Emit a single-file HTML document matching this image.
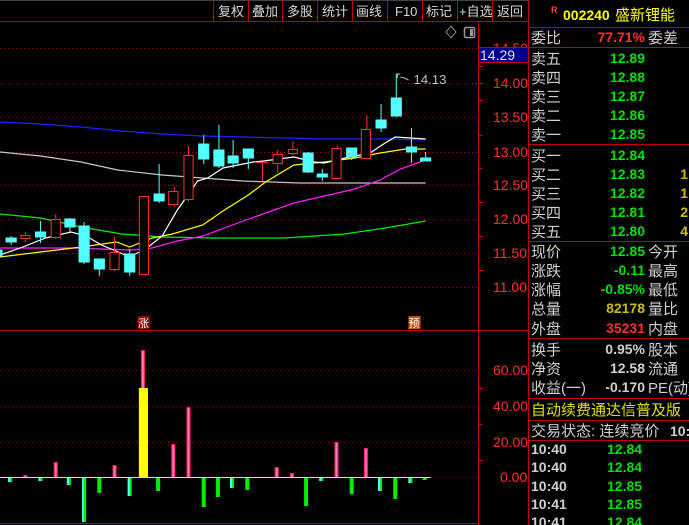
<!DOCTYPE html>
<html><head><meta charset="utf-8"><style>
html,body{margin:0;padding:0;background:#000;width:689px;height:525px;overflow:hidden}
svg{display:block;font-family:"Liberation Sans","Noto Sans CJK SC",sans-serif}
</style></head><body>
<svg width="689" height="525" viewBox="0 0 689 525" xmlns="http://www.w3.org/2000/svg">
<rect width="689" height="525" fill="#000"/>
<!-- toolbar -->
<g stroke="#c00000" stroke-width="1">
<line x1="0" y1="21.5" x2="528" y2="21.5"/>
<line x1="0" y1="0.5" x2="528" y2="0.5" stroke="#444"/>
<line x1="213.5" y1="0" x2="213.5" y2="21"/><line x1="248.5" y1="0" x2="248.5" y2="21"/>
<line x1="282.5" y1="0" x2="282.5" y2="21"/><line x1="317.5" y1="0" x2="317.5" y2="21"/>
<line x1="352.5" y1="0" x2="352.5" y2="21"/><line x1="387.5" y1="0" x2="387.5" y2="21"/>
<line x1="422.5" y1="0" x2="422.5" y2="21"/><line x1="457.5" y1="0" x2="457.5" y2="21"/>
<line x1="492.5" y1="0" x2="492.5" y2="21"/>
</g>
<g fill="#d8d8d8" font-size="13">
<text x="218" y="16">复权</text><text x="252" y="16">叠加</text><text x="287" y="16">多股</text>
<text x="322" y="16">统计</text><text x="356" y="16">画线</text><text x="395" y="16">F10</text>
<text x="426" y="16">标记</text><text x="459" y="16">+自选</text><text x="497" y="16">返回</text>
</g>
<!-- icons -->
<path d="M451 26 L456 32 L451 38 L446 32 Z" fill="none" stroke="#888" stroke-width="1"/>
<rect x="464.5" y="27.5" width="10" height="10" rx="1.5" fill="none" stroke="#999" stroke-width="1.5"/>
<rect x="470" y="29" width="3" height="7" fill="#999"/>
<!-- axes -->
<g stroke="#c00000">
<line x1="478.5" y1="22" x2="478.5" y2="525"/>
<line x1="528.5" y1="0" x2="528.5" y2="525"/>
<line x1="0" y1="330.5" x2="528" y2="330.5"/>
<line x1="0" y1="523.5" x2="478" y2="523.5"/>
</g>
<g stroke="#c00000" stroke-dasharray="1,3">
<line x1="0" y1="48.5" x2="478" y2="48.5"/><line x1="0" y1="83.5" x2="478" y2="83.5"/>
<line x1="0" y1="117.5" x2="478" y2="117.5"/><line x1="0" y1="152.5" x2="478" y2="152.5"/>
<line x1="0" y1="185.5" x2="478" y2="185.5"/><line x1="0" y1="219.5" x2="478" y2="219.5"/>
<line x1="0" y1="253.5" x2="478" y2="253.5"/><line x1="0" y1="287.5" x2="478" y2="287.5"/>
<line x1="0" y1="370.5" x2="478" y2="370.5"/><line x1="0" y1="406.5" x2="478" y2="406.5"/>
<line x1="0" y1="442.5" x2="478" y2="442.5"/><line x1="425" y1="477.5" x2="478" y2="477.5"/>
</g>
<g stroke="#c00000">
<line x1="478" y1="66.5" x2="483" y2="66.5"/><line x1="478" y1="100.5" x2="483" y2="100.5"/>
<line x1="478" y1="135.5" x2="483" y2="135.5"/><line x1="478" y1="168.5" x2="483" y2="168.5"/>
<line x1="478" y1="202.5" x2="483" y2="202.5"/><line x1="478" y1="236.5" x2="483" y2="236.5"/>
<line x1="478" y1="270.5" x2="483" y2="270.5"/><line x1="478" y1="83.5" x2="483" y2="83.5"/>
<line x1="478" y1="388.5" x2="483" y2="388.5"/><line x1="478" y1="424.5" x2="483" y2="424.5"/>
<line x1="478" y1="460.5" x2="483" y2="460.5"/>
</g>
<g fill="#ff3030" font-size="14">
<text x="493" y="53">14.50</text>
<text x="493" y="88">14.00</text><text x="493" y="122">13.50</text><text x="493" y="157">13.00</text>
<text x="493" y="190">12.50</text><text x="493" y="224">12.00</text><text x="493" y="258">11.50</text>
<text x="493" y="292">11.00</text>
<text x="493" y="375">60.00</text><text x="493" y="411">40.00</text><text x="493" y="447">20.00</text>
<text x="500" y="482">0.00</text>
</g>
<rect x="478.5" y="47.5" width="50" height="15" fill="#000090" stroke="#c00000"/>
<text x="480" y="60" fill="#e0e0e0" font-size="14">14.29</text>

<g transform="scale(1.0135,1)">
<!-- MAs -->
<g fill="none" stroke-width="1.2">
<polyline stroke="#2020ff" points="0,122 40,124 80,127 120,131 160,134 200,136 240,137 280,138 320,139 380,139 420,140"/>
<polyline stroke="#c8c8c8" points="0,152 40,156 80,162 116,170 160,175 200,178 240,181 296,183 420,183"/>
<polyline stroke="#00ee00" points="0,214 40,218 80,227 120,234 160,237 210,238 280,238 310,236 340,234 380,228 420,221"/>
<polyline stroke="#ff20ff" points="0,248 70,248 130,250 150,248 175,241 200,236 240,221 290,203 320,196 350,189 375,180 395,169 420,160"/>
<polyline stroke="#ffff00" points="0,257 40,252 80,247 115,242 128,247 150,238 170,234 200,225 220,211 245,195 262,182 290,165 320,162 350,158 375,153 400,149 420,149"/>
<polyline stroke="#ffffff" points="0,255 20,248 45,238 70,232 85,236 100,245 112,250 128,257 145,248 160,236 175,210 195,181 205,178 220,168 250,162 260,161 290,157 310,162 320,163 345,157 365,153 380,143 390,137 405,138 420,139"/>
</g>
<!-- candles: cyan -->
<g stroke="#54ffff" fill="#54ffff">
<line x1="11" y1="236" x2="11" y2="245"/><rect x="6" y="238" width="10" height="4"/>
<rect x="0" y="250" width="2" height="6"/>
<line x1="40" y1="221" x2="40" y2="243"/><rect x="35" y="232" width="10" height="5"/>
<line x1="69" y1="218" x2="69" y2="232"/><rect x="64" y="219" width="10" height="8"/>
<line x1="83" y1="222" x2="83" y2="264"/><rect x="78" y="226" width="10" height="36"/>
<line x1="98" y1="259" x2="98" y2="276"/><rect x="93" y="259" width="10" height="10"/>
<line x1="128" y1="249" x2="128" y2="276"/><rect x="123" y="254" width="10" height="18"/>
<line x1="157" y1="164" x2="157" y2="203"/><rect x="152" y="194" width="10" height="7"/>
<line x1="201" y1="135" x2="201" y2="164"/><rect x="196" y="144" width="10" height="15"/>
<line x1="216" y1="125" x2="216" y2="168"/><rect x="211" y="150" width="10" height="16"/>
<line x1="230" y1="140" x2="230" y2="168"/><rect x="225" y="156" width="10" height="7"/>
<line x1="245" y1="149" x2="245" y2="169"/><rect x="240" y="149" width="10" height="9"/>
<line x1="304" y1="152" x2="304" y2="173"/><rect x="299" y="153" width="10" height="19"/>
<line x1="318" y1="169" x2="318" y2="181"/><rect x="313" y="174" width="10" height="3"/>
<line x1="347" y1="148" x2="347" y2="160"/><rect x="342" y="148" width="10" height="9"/>
<line x1="376" y1="104" x2="376" y2="132"/><rect x="371" y="120" width="10" height="8"/>
<line x1="391" y1="74" x2="391" y2="117"/><rect x="386" y="98" width="10" height="18"/>
<line x1="406" y1="128" x2="406" y2="163"/><rect x="401" y="147" width="10" height="5"/>
<line x1="420" y1="152" x2="420" y2="161"/><rect x="415" y="158" width="10" height="3"/>
</g>
<!-- candles: red hollow -->
<g stroke="#ff3030" fill="#000">
<line x1="25" y1="232" x2="25" y2="242"/><rect x="20.5" y="235.5" width="9" height="3"/>
<line x1="55" y1="214" x2="55" y2="239"/><rect x="50.5" y="219.5" width="9" height="18"/>
<line x1="113" y1="237" x2="113" y2="271"/><rect x="108.5" y="252.5" width="9" height="17"/>
<rect x="137.5" y="196.5" width="9" height="78"/>
<line x1="172" y1="187" x2="172" y2="207"/><rect x="166.5" y="191.5" width="9" height="13"/>
<line x1="186" y1="146" x2="186" y2="201"/><rect x="181.5" y="155.5" width="9" height="44"/>
<line x1="259" y1="162" x2="259" y2="181"/><line x1="253" y1="162.5" x2="265" y2="162.5"/>
<line x1="274" y1="150" x2="274" y2="173"/><rect x="269.5" y="154.5" width="9" height="9"/>
<line x1="289" y1="141" x2="289" y2="155"/><rect x="284.5" y="149.5" width="9" height="4"/>
<line x1="333" y1="146" x2="333" y2="178"/><rect x="327.5" y="148.5" width="9" height="30"/>
<line x1="362" y1="115" x2="362" y2="158"/><rect x="356.5" y="129.5" width="9" height="29"/>
</g>
<!-- high marker -->
<path d="M391 74 L395 74 M392 74 L392 78 M395 77 L399 78 L403 80" stroke="#c0c0c0" fill="none"/>
<text x="408" y="84" fill="#c0c0c0" font-size="13">14.13</text>
<!-- labels -->
<rect x="136" y="316" width="12" height="13" fill="#900000"/>
<text x="136" y="327" fill="#fff" font-size="11">涨</text>
<rect x="403" y="316" width="12" height="13" fill="#c05000"/>
<text x="403" y="327" fill="#fff" font-size="11">预</text>
<!-- volume -->
<g fill="#00ee00">
<rect x="8" y="477" width="4" height="5"/><rect x="38" y="477" width="4" height="4"/>
<rect x="66" y="477" width="4" height="8"/><rect x="81" y="477" width="4" height="45"/>
<rect x="96" y="477" width="4" height="16"/><rect x="126" y="477" width="4" height="19"/>
<rect x="154" y="477" width="4" height="14"/><rect x="199" y="477" width="4" height="30"/>
<rect x="213" y="477" width="4" height="20"/><rect x="227" y="477" width="4" height="11"/>
<rect x="242" y="477" width="4" height="13"/><rect x="300" y="477" width="4" height="29"/>
<rect x="315" y="477" width="4" height="4"/><rect x="345" y="477" width="4" height="17"/>
<rect x="373" y="477" width="4" height="14"/><rect x="388" y="477" width="4" height="22"/>
<rect x="403" y="477" width="4" height="6"/><rect x="417" y="477" width="4" height="3"/>
</g>
<g fill="#54ffff">
<rect x="8" y="477" width="2" height="5"/><rect x="38" y="477" width="2" height="4"/>
<rect x="66" y="477" width="2" height="8"/><rect x="81" y="477" width="1.5" height="45"/>
<rect x="126" y="477" width="2" height="19"/><rect x="227" y="477" width="2" height="11"/>
<rect x="315" y="477" width="2" height="4"/><rect x="373" y="477" width="2" height="14"/>
<rect x="403" y="477" width="2" height="6"/>
</g>
<g fill="#ff70c0" stroke="#ff2050" stroke-width="1">
<rect x="23.5" y="475.5" width="3" height="2"/><rect x="53.5" y="462.5" width="3" height="15"/>
<rect x="111.5" y="465.5" width="3" height="12"/><rect x="139.5" y="350.5" width="3" height="127"/>
<rect x="169.5" y="444.5" width="3" height="33"/><rect x="184.5" y="407.5" width="3" height="70"/>
<rect x="271.5" y="467.5" width="3" height="10"/><rect x="286.5" y="473.5" width="3" height="4"/>
<rect x="330.5" y="442.5" width="3" height="35"/><rect x="359.5" y="448.5" width="3" height="29"/>
</g>
<line x1="0" y1="477.5" x2="425" y2="477.5" stroke="#ffff00"/>
<rect x="137" y="388" width="9" height="90" fill="#ffff00"/>
</g>

<!-- right panel -->
<g stroke="#c00000">
<line x1="529" y1="27.5" x2="689" y2="27.5"/><line x1="529" y1="47.5" x2="689" y2="47.5"/>
<line x1="529" y1="144.5" x2="689" y2="144.5"/><line x1="529" y1="241.5" x2="689" y2="241.5"/>
<line x1="529" y1="338.5" x2="689" y2="338.5"/><line x1="529" y1="398.5" x2="689" y2="398.5"/>
<line x1="529" y1="420.5" x2="689" y2="420.5"/><line x1="529" y1="440.5" x2="689" y2="440.5"/>
</g>
<text x="551" y="13" fill="#ff4040" font-size="9" font-weight="bold">R</text>
<text x="563" y="20" fill="#ffff00" font-size="14" font-weight="bold">002240</text>
<text x="615" y="20" fill="#ffff00" font-size="15">盛新锂能</text>
<g fill="#d0d0d0" font-size="15">
<text x="531" y="43">委比</text><text x="648" y="43">委差</text>
<text x="531" y="64">卖五</text><text x="531" y="83">卖四</text><text x="531" y="102">卖三</text>
<text x="531" y="121">卖二</text><text x="531" y="140">卖一</text>
<text x="531" y="161">买一</text><text x="531" y="180">买二</text><text x="531" y="199">买三</text>
<text x="531" y="218">买四</text><text x="531" y="237">买五</text>
<text x="531" y="257">现价</text><text x="648" y="257">今开</text>
<text x="531" y="276">涨跌</text><text x="648" y="276">最高</text>
<text x="531" y="295">涨幅</text><text x="648" y="295">最低</text>
<text x="531" y="314">总量</text><text x="648" y="314">量比</text>
<text x="531" y="334">外盘</text><text x="648" y="334">内盘</text>
<text x="531" y="355">换手</text><text x="648" y="355">股本</text>
<text x="531" y="374">净资</text><text x="648" y="374">流通</text>
<text x="531" y="393">收益(一)</text><text x="648" y="393">PE(动)</text>
<text x="531" y="436">交易状态: 连续竞价</text>
</g>
<text x="531" y="415" fill="#e0e000" font-size="15">自动续费通达信普及版</text>
<text x="670" y="436" fill="#d0d0d0" font-size="14" font-weight="bold">10:</text>
<g font-size="14" font-weight="bold" text-anchor="end">
<text x="645" y="42" fill="#ff3030">77.71%</text>
<g fill="#00e000">
<text x="645" y="63">12.89</text><text x="645" y="82">12.88</text><text x="645" y="101">12.87</text>
<text x="645" y="120">12.86</text><text x="645" y="139">12.85</text>
<text x="645" y="160">12.84</text><text x="645" y="179">12.83</text><text x="645" y="198">12.82</text>
<text x="645" y="217">12.81</text><text x="645" y="236">12.80</text>
<text x="645" y="256">12.85</text><text x="645" y="275">-0.11</text><text x="645" y="294">-0.85%</text>
</g>
<g fill="#c8c000"><text x="688" y="179">1</text><text x="688" y="198">1</text><text x="688" y="217">2</text><text x="688" y="236">4</text>
<text x="645" y="313">82178</text></g>
<text x="645" y="333" fill="#ff3030">35231</text>
<g fill="#d0d0d0"><text x="645" y="354">0.95%</text><text x="645" y="373">12.58</text><text x="645" y="392">-0.170</text></g>
</g>
<g font-size="14" font-weight="bold">
<g fill="#d0d0d0"><text x="531" y="454">10:40</text><text x="531" y="472">10:40</text><text x="531" y="491">10:40</text><text x="531" y="509">10:41</text><text x="531" y="527">10:41</text></g>
<g fill="#00e000"><text x="607" y="454">12.84</text><text x="607" y="472">12.84</text><text x="607" y="491">12.85</text><text x="607" y="509">12.85</text><text x="607" y="527">12.84</text></g>
</g>
</svg>
</body></html>
